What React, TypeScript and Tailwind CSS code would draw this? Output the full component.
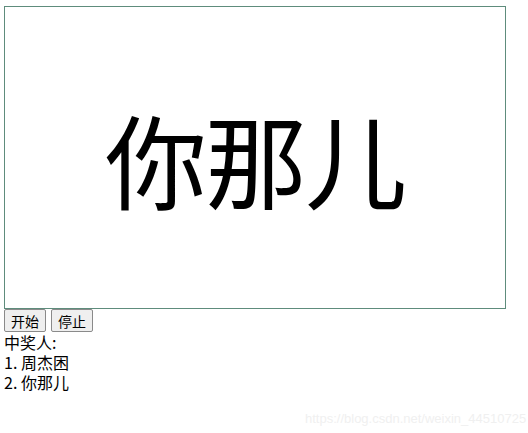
export default function App() {
  const winners = ['周杰困', '你那儿'];
  return (
    <div className="relative h-[433px] w-[528px] bg-white text-black" style={{ fontFamily: '"Noto Sans CJK SC", "Noto Sans", sans-serif' }}>
      <div className="pl-1 pt-[6px]">
        <div className="flex h-[303px] w-[502px] items-center justify-center border border-[#5e8c7c]">
          <span className="text-[102px] leading-none tracking-[-2px]">你那儿</span>
        </div>
        <div className="flex gap-[5px]">
          <button className="h-[23px] w-[42px] rounded-[2px] border border-[#8a8a8a] bg-[#efefef] text-[14px] leading-none">开始</button>
          <button className="h-[23px] w-[42px] rounded-[2px] border border-[#8a8a8a] bg-[#efefef] text-[14px] leading-none">停止</button>
        </div>
        <div className="text-[16px] leading-[20px]">
          <div>中奖人:</div>
          {winners.map((w, i) => (
            <div key={w}>
              {i + 1}. {w}
            </div>
          ))}
        </div>
      </div>
      <div className="absolute left-[305px] top-[409px] text-[13px] text-[#f0f0f0]" style={{ fontFamily: '"Liberation Sans", sans-serif' }}>
        https://blog.csdn.net/weixin_44510725
      </div>
    </div>
  );
}
